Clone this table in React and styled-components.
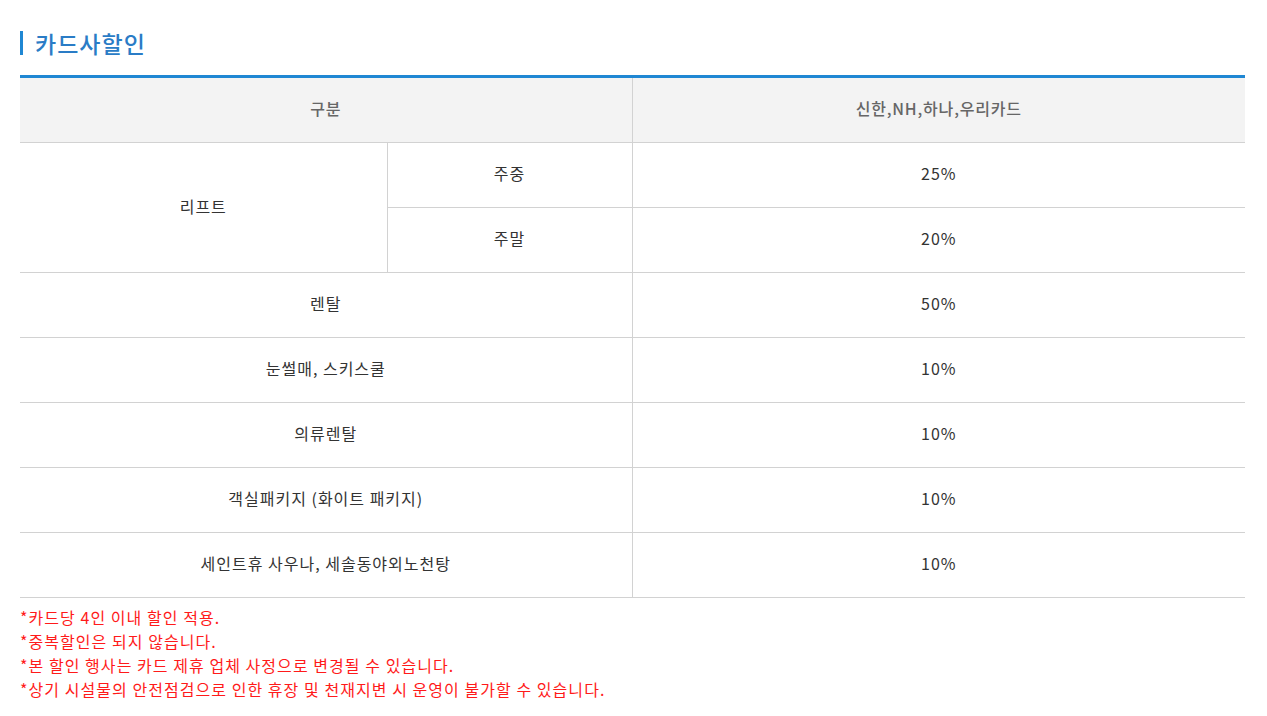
import styled, { createGlobalStyle } from "styled-components";

const GlobalStyle = createGlobalStyle`
  body {
    margin: 0;
    background: #fff;
    font-family: "Noto Sans CJK KR", "Noto Sans", sans-serif;
  }
`;

const rows = [
  { label: "렌탈", rate: "50%" },
  { label: "눈썰매, 스키스쿨", rate: "10%" },
  { label: "의류렌탈", rate: "10%" },
  { label: "객실패키지 (화이트 패키지)", rate: "10%" },
  { label: "세인트휴 사우나, 세솔동야외노천탕", rate: "10%" },
];

const notes = [
  "*카드당 4인 이내 할인 적용.",
  "*중복할인은 되지 않습니다.",
  "*본 할인 행사는 카드 제휴 업체 사정으로 변경될 수 있습니다.",
  "*상기 시설물의 안전점검으로 인한 휴장 및 천재지변 시 운영이 불가할 수 있습니다.",
];

const App = () => {
  return (
    <Page>
      <GlobalStyle />
      <Title>카드사할인</Title>
      <Table>
        <colgroup>
          <col style={{ width: 367 }} />
          <col style={{ width: 245 }} />
          <col />
        </colgroup>
        <thead>
          <tr>
            <Th colSpan={2}>구분</Th>
            <Th>신한,NH,하나,우리카드</Th>
          </tr>
        </thead>
        <tbody>
          <tr>
            <Td rowSpan={2}>리프트</Td>
            <Td $left>주중</Td>
            <Td>25%</Td>
          </tr>
          <tr>
            <Td $left>주말</Td>
            <Td>20%</Td>
          </tr>
          {rows.map((r) => (
            <tr key={r.label}>
              <Td colSpan={2}>{r.label}</Td>
              <Td>{r.rate}</Td>
            </tr>
          ))}
        </tbody>
      </Table>
      <Notes>
        {notes.map((n) => (
          <li key={n}>{n}</li>
        ))}
      </Notes>
    </Page>
  );
};

const Page = styled.div`
  padding: 31px 22px 0 20px;
`;

const Title = styled.h2`
  margin: 0 0 20px;
  padding-left: 12px;
  border-left: 3px solid #1f87d3;
  height: 24px;
  line-height: 24px;
  font-size: 23px;
  font-weight: 500;
  letter-spacing: 1px;
  color: #2a7cc6;
`;

const Table = styled.table`
  width: 100%;
  border-collapse: collapse;
  table-layout: fixed;
  border-top: 3px solid #1f87d3;
`;

const Th = styled.th`
  height: 60px;
  padding: 0 0 4px;
  background: #f3f3f3;
  border-bottom: 1px solid #d2d2d2;
  border-left: 1px solid #d2d2d2;
  font-size: 16px;
  font-weight: 500;
  letter-spacing: 0.8px;
  color: #666;
  text-align: center;

  &:first-child {
    border-left: none;
  }
`;

const Td = styled.td`
  height: 60px;
  padding: 0 0 4px;
  border-bottom: 1px solid #d2d2d2;
  border-left: 1px solid #d2d2d2;
  font-size: 16px;
  letter-spacing: 1px;
  color: #333;
  text-align: center;

  &:first-child {
    border-left: ${(p) => (p.$left ? "1px solid #d2d2d2" : "none")};
  }
`;

const Notes = styled.ul`
  list-style: none;
  margin: 7px 0 0;
  padding: 0;
  font-size: 16px;
  line-height: 24px;
  letter-spacing: 1.05px;
  color: #ff1a1a;
`;

export default App;
